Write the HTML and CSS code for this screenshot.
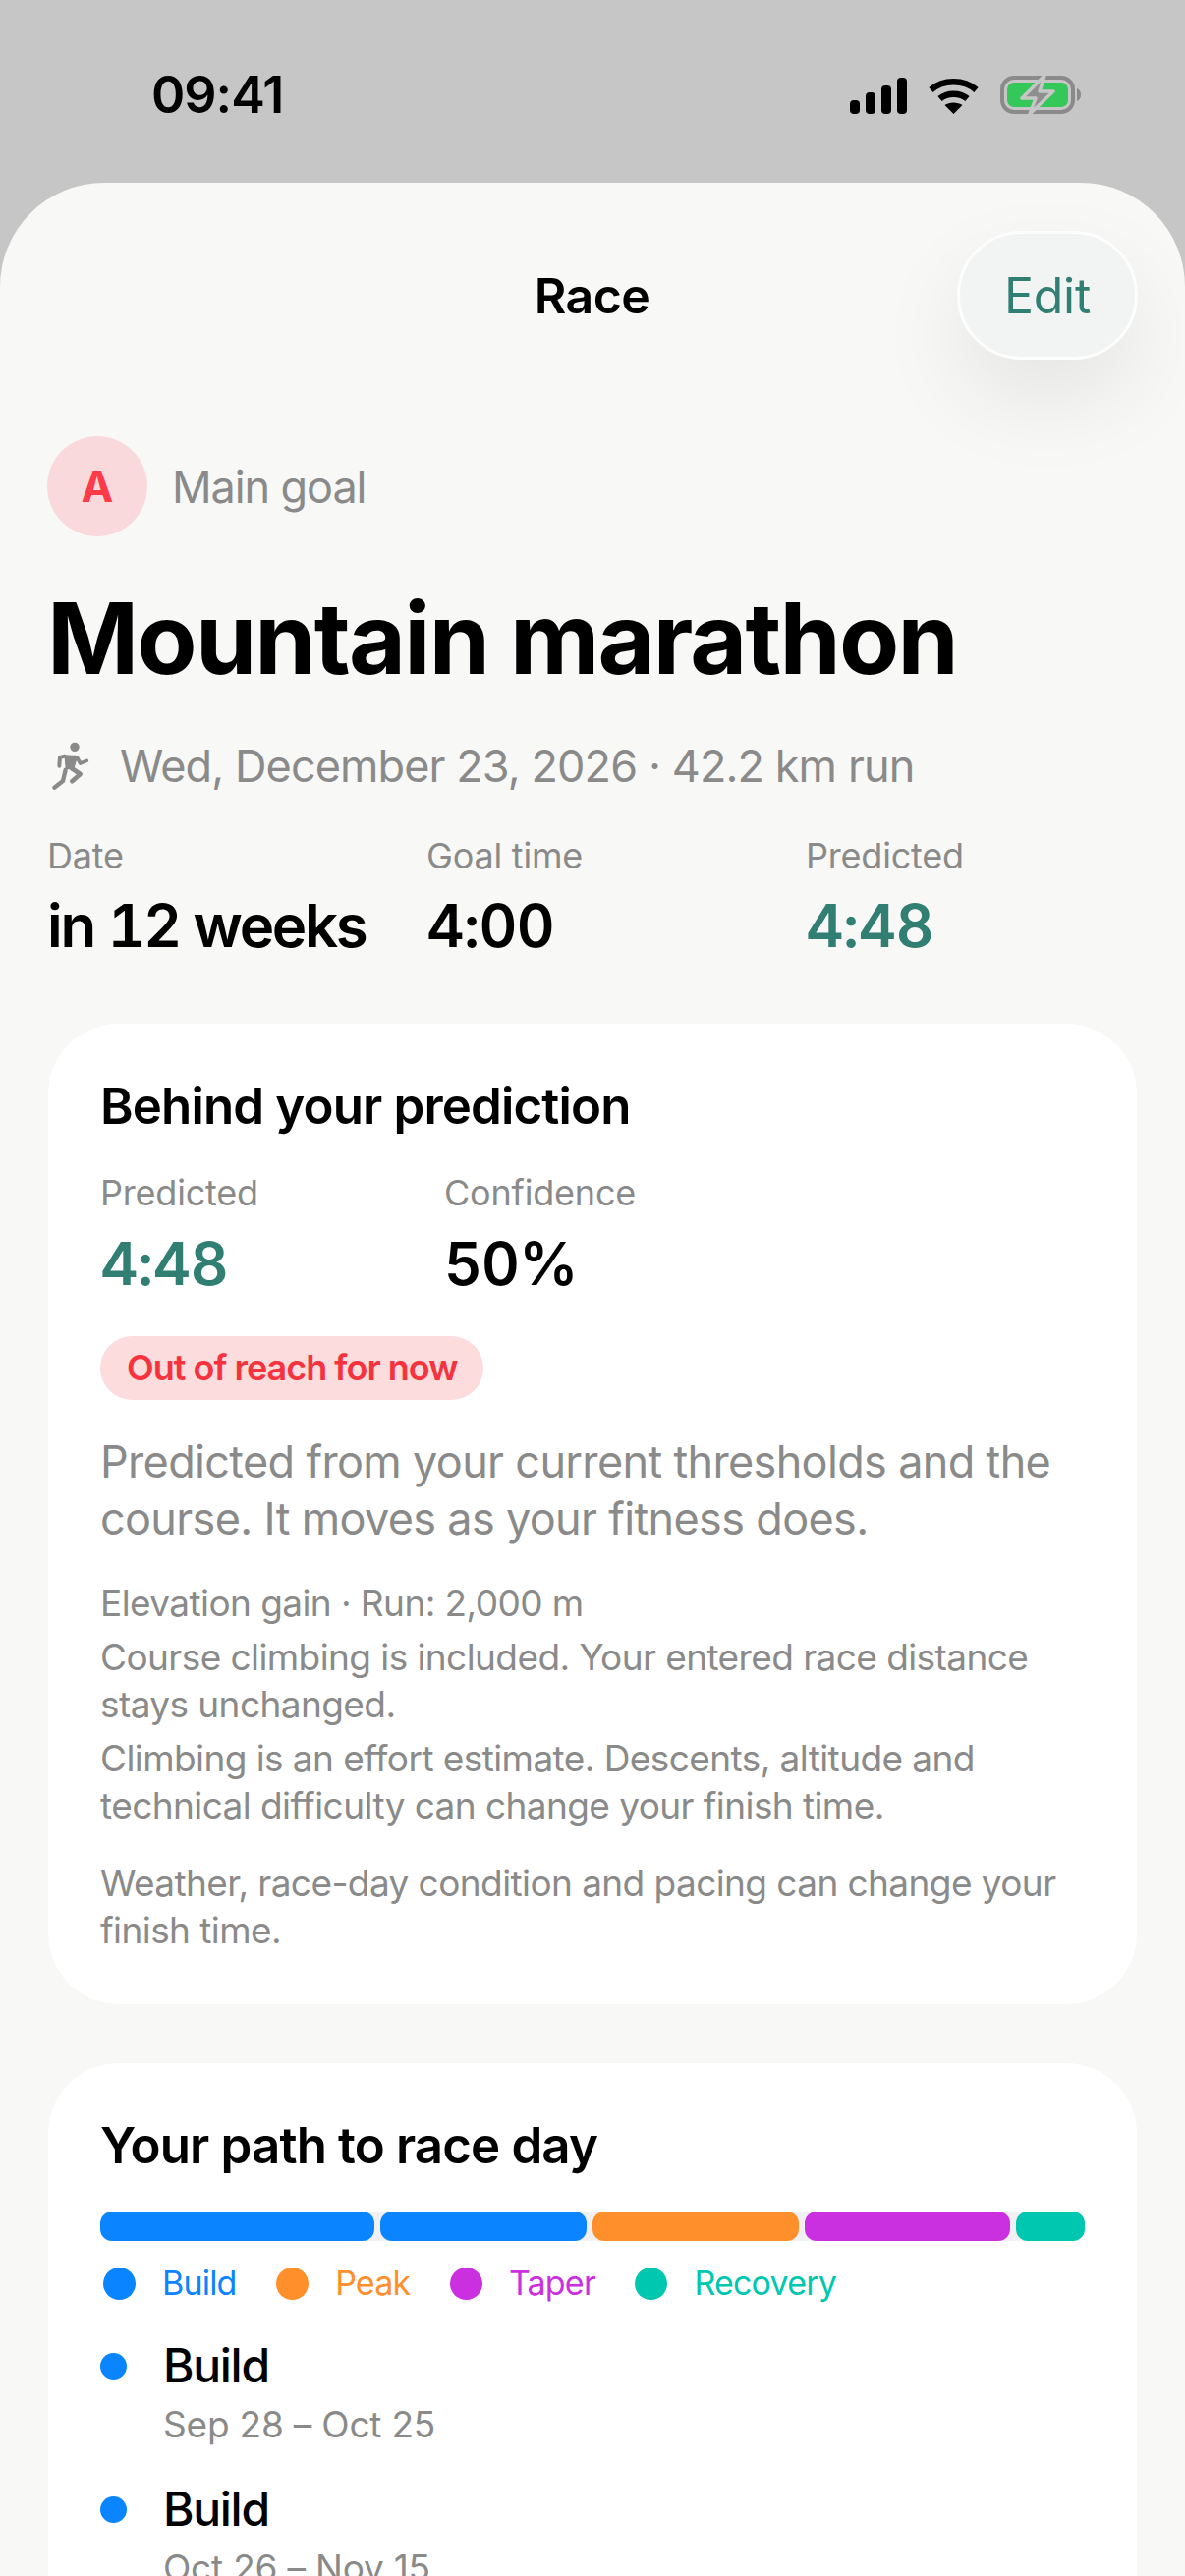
FILE: index.html
```html
<!DOCTYPE html>
<html lang="en">
<head>
  <meta charset="UTF-8">
  <title>Race</title>
  <link rel="stylesheet" href="styles.css">
</head>
<body>
  <div class="status-bar">
    <span class="status-time">09:41</span>
    <div class="status-icons">
      <svg class="icon-signal" width="58" height="38" viewBox="0 0 58 38">
        <rect x="0" y="23" width="10" height="14" rx="4"/>
        <rect x="16" y="15" width="10" height="22" rx="4"/>
        <rect x="32" y="8" width="10" height="29" rx="4"/>
        <rect x="48" y="0" width="10" height="37" rx="4"/>
      </svg>
      <svg class="icon-wifi" width="51" height="38" viewBox="0 0 51 38">
        <path d="M2.5 12.5 C15 1.5 36 1.5 48.500 12.500" fill="none" stroke="#000" stroke-width="6.500"/>
        <path d="M11.500 21.500 C19 15 32 15 39.500 21.500" fill="none" stroke="#000" stroke-width="6.500"/>
        <path d="M25.500 37 L16.500 28 C21 24.500 30 24.500 34.500 28 Z"/>
      </svg>
      <svg class="icon-battery" width="84" height="44" viewBox="0 0 84 44">
        <rect x="2" y="5" width="72" height="35" rx="12" fill="none" stroke="#8a8a8a" stroke-width="4"/>
        <rect x="7" y="10" width="62" height="25" rx="7" fill="#34c759"/>
        <path d="M78 16 C81 17 82 20 82 22.500 C82 25 81 28 78 29 Z" fill="#8a8a8a"/>
        <path d="M45 3 L22 26 H36 L30 42 L54 19 H40 Z" fill="#8f8f8f" stroke="#c6c6c6" stroke-width="3.500" stroke-linejoin="round"/>
      </svg>
    </div>
  </div>

  <div class="sheet">
    <div class="nav">
      <span></span>
      <span class="nav-title">Race</span>
      <button class="edit-btn">Edit</button>
    </div>

    <div class="goal-row">
      <span class="goal-badge">A</span>
      <span class="goal-label">Main goal</span>
    </div>

    <h1 class="race-title">Mountain marathon</h1>

    <div class="race-meta">
      <svg class="icon-run" width="40" height="50" viewBox="70 44 112 150">
        <circle cx="138" cy="60" r="14" fill="#8a8a8a"/>
        <path d="M106 84 L148 86 L136 128 L110 128 Z" fill="#8a8a8a"/>
        <path d="M108 88 L93 92 L91 118" fill="none" stroke="#8a8a8a" stroke-width="12" stroke-linecap="round" stroke-linejoin="round"/>
        <path d="M145 92 L155 110 L175 102" fill="none" stroke="#8a8a8a" stroke-width="11" stroke-linecap="round" stroke-linejoin="round"/>
        <path d="M124 122 L155 143 L130 165" fill="none" stroke="#8a8a8a" stroke-width="14" stroke-linecap="round" stroke-linejoin="round"/>
        <path d="M110 130 L102 164 L76 184" fill="none" stroke="#8a8a8a" stroke-width="13" stroke-linecap="round" stroke-linejoin="round"/>
      </svg>
      <span>Wed, December 23, 2026 · 42.2 km run</span>
    </div>

    <div class="stats">
      <div>
        <div class="stat-label">Date</div>
        <div class="stat-value words">in 12 weeks</div>
      </div>
      <div>
        <div class="stat-label">Goal time</div>
        <div class="stat-value">4:00</div>
      </div>
      <div>
        <div class="stat-label">Predicted</div>
        <div class="stat-value teal">4:48</div>
      </div>
    </div>

    <div class="card">
      <h2 class="card-title">Behind your prediction</h2>
      <div class="card-stats">
        <div>
          <div class="stat-label">Predicted</div>
          <div class="stat-value teal">4:48</div>
        </div>
        <div>
          <div class="stat-label">Confidence</div>
          <div class="stat-value">50%</div>
        </div>
      </div>
      <span class="reach-pill">Out of reach for now</span>
      <p class="card-desc">Predicted from your current thresholds and the course. It moves as your fitness does.</p>
      <p class="card-note first">Elevation gain · Run: 2,000 m</p>
      <p class="card-note">Course climbing is included. Your entered race distance stays unchanged.</p>
      <p class="card-note">Climbing is an effort estimate. Descents, altitude and technical difficulty can change your finish time.</p>
      <p class="card-note last">Weather, race-day condition and pacing can change your finish time.</p>
    </div>

    <div class="card path-card">
      <h2 class="card-title">Your path to race day</h2>
      <div class="phase-bar">
        <span class="build-bg" style="flex-grow: 4"></span>
        <span class="build-bg" style="flex-grow: 3"></span>
        <span class="peak-bg" style="flex-grow: 3"></span>
        <span class="taper-bg" style="flex-grow: 3"></span>
        <span class="recovery-bg" style="flex-grow: 1"></span>
      </div>
      <div class="legend">
        <span class="legend-dot build-bg"></span><span class="legend-text build-text">Build</span>
        <span class="legend-dot peak-bg"></span><span class="legend-text peak-text">Peak</span>
        <span class="legend-dot taper-bg"></span><span class="legend-text taper-text">Taper</span>
        <span class="legend-dot recovery-bg"></span><span class="legend-text recovery-text">Recovery</span>
      </div>
      <div class="phase">
        <span class="phase-dot build-bg"></span>
        <div>
          <div class="phase-name">Build</div>
          <div class="phase-date">Sep 28 – Oct 25</div>
        </div>
      </div>
      <div class="phase">
        <span class="phase-dot build-bg"></span>
        <div>
          <div class="phase-name">Build</div>
          <div class="phase-date">Oct 26 – Nov 15</div>
        </div>
      </div>
    </div>
  </div>
</body>
</html>
```

FILE: styles.css
```css
html, body {
  margin: 0;
  padding: 0;
  height: 2622px;
  overflow: hidden;
}

body {
  background-color: #c6c6c6;
  font-family: Inter, "Noto Sans", sans-serif;
  color: #000;
}

h1, h2, p {
  margin: 0;
}

.status-bar {
  height: 186px;
  box-sizing: border-box;
  padding: 72px 104px 0 154px;
  display: flex;
  justify-content: space-between;
  align-items: flex-start;
}

.status-time {
  font-size: 52px;
  font-weight: 600;
  line-height: 50px;
  letter-spacing: -1px;
}

.status-icons {
  display: flex;
  align-items: flex-start;
  margin-top: 7px;
}

.icon-wifi {
  margin-left: 22px;
}

.icon-battery {
  margin-left: 22px;
  margin-top: -5px;
}

.sheet {
  height: 2436px;
  box-sizing: border-box;
  padding: 49px 49px 0 48px;
  background-color: #f8f8f6;
  border-radius: 106px 106px 0 0;
}

.nav {
  display: grid;
  grid-template-columns: 1fr auto 1fr;
  align-items: center;
}

.nav-title {
  font-size: 50px;
  font-weight: 600;
  letter-spacing: -.6px;
}

.edit-btn {
  justify-self: end;
  width: 184px;
  height: 131px;
  margin-right: -1px;
  box-sizing: border-box;
  border: 3px solid #fdfdfd;
  border-radius: 66px;
  background-color: #f2f3f3;
  color: #317e72;
  font-family: inherit;
  font-size: 50px;
  letter-spacing: -.3px;
  box-shadow: 0 40px 90px rgba(0, 0, 0, .08);
  padding: 0;
}

.goal-row {
  display: flex;
  align-items: center;
  gap: 25px;
  margin-top: 78px;
}

.goal-badge {
  width: 102px;
  height: 102px;
  border-radius: 50%;
  background-color: #f9d9db;
  color: #ff3b4a;
  font-size: 44px;
  font-weight: 700;
  display: flex;
  align-items: center;
  justify-content: center;
}

.goal-label {
  font-size: 45px;
  color: #8a8a8a;
  letter-spacing: -1.1px;
}

.race-title {
  font-size: 100px;
  font-weight: 700;
  line-height: 110px;
  margin-top: 49px;
  letter-spacing: -1.8px;
}

.race-meta {
  display: flex;
  align-items: center;
  gap: 30px;
  margin-top: 50px;
  font-size: 45px;
  line-height: 50px;
  color: #8a8a8a;
  letter-spacing: -.9px;
}

.icon-run {
  margin-left: 4px;
  flex: none;
}

.stats {
  display: grid;
  grid-template-columns: repeat(3, 336px);
  column-gap: 50px;
  margin-top: 44px;
}

.stat-label {
  font-size: 36px;
  line-height: 44px;
  color: #8a8a8a;
  letter-spacing: -.2px;
}

.stat-value {
  font-size: 60px;
  font-weight: 600;
  line-height: 72px;
  margin-top: 13px;
  white-space: nowrap;
  letter-spacing: -.7px;
  font-variant-numeric: tabular-nums;
}

.stat-value.words {
  letter-spacing: -2.3px;
}

.teal {
  color: #317e72;
}

.card {
  margin: 64px 0 0 1px;
  padding: 53px 54px 51px 53px;
  background-color: #fff;
  border-radius: 72px;
}

.card-title {
  font-size: 51px;
  font-weight: 600;
  line-height: 62px;
  letter-spacing: -.85px;
}

.card-stats {
  display: grid;
  grid-template-columns: 350px 1fr;
  margin-top: 35px;
}

.card-stats .stat-value {
  margin-top: 14px;
}

.reach-pill {
  display: inline-block;
  margin-top: 38px;
  padding: 0 27px;
  height: 65px;
  line-height: 65px;
  border-radius: 33px;
  background-color: #fcdcdd;
  color: #f5333f;
  font-size: 36px;
  font-weight: 600;
  letter-spacing: -1px;
}

.card-desc {
  margin-top: 34px;
  font-size: 45px;
  line-height: 58px;
  color: #8a8a8a;
  letter-spacing: -.66px;
}

.card-note {
  margin-top: 7px;
  font-size: 37px;
  line-height: 48px;
  color: #8a8a8a;
  letter-spacing: -.58px;
}

.card-note.first {
  margin-top: 33px;
}

.card-note.last {
  margin-top: 31px;
}

.path-card {
  margin-top: 60px;
  padding-top: 53px;
}

.phase-bar {
  display: flex;
  gap: 6px;
  height: 30px;
  margin-top: 36px;
  margin-right: -1px;
  background-color: #f0f0f2;
  border-radius: 15px;
}

.phase-bar span {
  flex-basis: 0;
  border-radius: 12px;
}

.legend {
  display: flex;
  align-items: center;
  margin-top: 21px;
  padding-left: 3px;
}

.legend-dot {
  width: 33px;
  height: 33px;
  border-radius: 50%;
  margin-right: 27px;
}

.legend-text {
  font-size: 34px;
  line-height: 44px;
  margin-right: 40.5px;
  letter-spacing: -.8px;
}

.phase {
  display: flex;
  margin-top: 34px;
}

.legend + .phase {
  margin-top: 32px;
}

.phase-dot {
  flex: none;
  width: 27px;
  height: 27px;
  border-radius: 50%;
  margin: 17px 37px 0 0;
}

.phase-name {
  font-size: 48px;
  font-weight: 500;
  line-height: 60px;
  letter-spacing: -1.3px;
}

.phase-date {
  margin-top: 8px;
  font-size: 37px;
  line-height: 44px;
  color: #8a8a8a;
  letter-spacing: -.2px;
}

.build-bg { background-color: #0a84ff; }
.peak-bg { background-color: #ff8f2b; }
.taper-bg { background-color: #cb30e0; }
.recovery-bg { background-color: #00c7b0; }

.build-text { color: #0a84ff; }
.peak-text { color: #ff8f2b; }
.taper-text { color: #cb30e0; }
.recovery-text { color: #00c7b0; }
```
